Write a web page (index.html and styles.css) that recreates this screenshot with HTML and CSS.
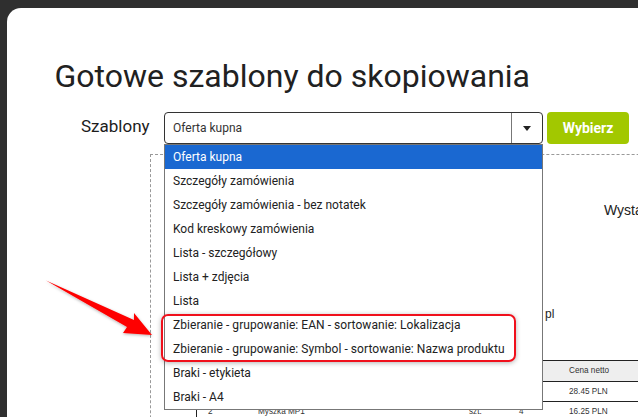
FILE: index.html
```html
<!DOCTYPE html>
<html lang="pl">
<head>
<meta charset="utf-8">
<title>Gotowe szablony</title>
<link rel="stylesheet" href="styles.css">
</head>
<body>
<main class="modal">
  <h1 class="title">Gotowe szablony do skopiowania</h1>
  <div class="picker">
    <label class="picker-label">Szablony</label>
    <div class="select">
      <span class="select-value">Oferta kupna</span>
      <span class="select-toggle"><span class="caret"></span></span>
    </div>
    <button class="choose">Wybierz</button>
  </div>
  <div class="preview">
    <span class="preview-issued">Wysta</span>
    <span class="preview-mail">pl</span>
    <div class="preview-table">
      <div class="preview-row head"><span class="c-price">Cena netto</span></div>
      <div class="preview-row"><span class="c-price">28.45 PLN</span></div>
      <div class="preview-row"><span class="c-no">2</span><span class="c-name">Myszka MP1</span><span class="c-unit">szt.</span><span class="c-qty">4</span><span class="c-price">16.25 PLN</span></div>
    </div>
  </div>
  <ul class="options">
    <li class="option active">Oferta kupna</li>
    <li class="option">Szczegóły zamówienia</li>
    <li class="option">Szczegóły zamówienia - bez notatek</li>
    <li class="option">Kod kreskowy zamówienia</li>
    <li class="option">Lista - szczegółowy</li>
    <li class="option">Lista + zdjęcia</li>
    <li class="option">Lista</li>
    <li class="option wide">Zbieranie - grupowanie: EAN - sortowanie: Lokalizacja</li>
    <li class="option wide">Zbieranie - grupowanie: Symbol - sortowanie: Nazwa produktu</li>
    <li class="option">Braki - etykieta</li>
    <li class="option">Braki - A4</li>
  </ul>
  <div class="highlight"></div>
  <svg class="arrow" width="120" height="70" viewBox="0 0 120 70">
    <defs><filter id="s" x="-20%" y="-20%" width="140%" height="150%"><feDropShadow dx="0" dy="1" stdDeviation="1.5" flood-color="#000" flood-opacity=".3"/></filter></defs>
    <path d="M1 0.5 L89 40 L89 33 L107 55 L78 53 L82 47 Z" fill="#fe0000" filter="url(#s)"/>
  </svg>
</main>
</body>
</html>
```
FILE: styles.css
```css
* { box-sizing: border-box; }
html, body { margin: 0; height: 100%; }
body {
  background: #2f2f2f;
  overflow: hidden;
  padding: 8px 0 0 7px;
  font-family: Roboto, "Liberation Sans", sans-serif;
}
.modal {
  position: relative;
  width: 631px;
  height: 409px;
  overflow: hidden;
  background: #fff;
  border-radius: 14px 0 0 0;
  padding: 50px 0 0 47.5px;
}
.title {
  margin: 0;
  font-size: 32px;
  line-height: 37px;
  font-weight: 400;
  color: #212121;
  white-space: nowrap;
}
.picker {
  display: flex;
  align-items: center;
  margin-top: 17px;
  margin-left: 26.5px;
}
.picker-label {
  width: 83px;
  font-size: 17px;
  line-height: 28px;
  margin-top: -5px;
  color: #1c1c1c;
}
.select {
  display: flex;
  width: 379px;
  height: 32px;
  border: 1px solid #333;
  border-radius: 4px;
  background: #fff;
}
.select-value {
  flex: 1;
  padding: 0 8px;
  font-size: 12px;
  line-height: 30px;
  color: #333;
}
.select-toggle {
  width: 31px;
  border-left: 1px solid #777;
  display: flex;
  align-items: center;
  justify-content: center;
}
.caret {
  width: 0;
  height: 0;
  border: 4px solid transparent;
  border-top: 5px solid #222;
  border-bottom: 0;
}
.choose {
  width: 82px;
  height: 32px;
  margin-left: 4px;
  border: 0;
  border-radius: 4px;
  background: #a2c800;
  color: #fff;
  font: 700 14px Roboto, sans-serif;
}
.preview {
  position: absolute;
  left: 143px;
  top: 146px;
  width: 600px;
  height: 400px;
  border: 1px dashed #999;
  font-family: "Liberation Sans", sans-serif;
}
.preview-issued {
  position: absolute;
  left: 453px;
  top: 47px;
  font-size: 14px;
  color: #222;
}
.preview-mail {
  position: absolute;
  left: 394px;
  top: 152px;
  font-size: 12px;
  color: #222;
}
.preview-table {
  position: absolute;
  left: 45px;
  top: 205px;
  width: 560px;
  border-top: 1px solid #222;
  border-left: 1px solid #222;
  font-size: 8.2px;
  color: #333;
}
.preview-row {
  position: relative;
  height: 20px;
  border-bottom: 1px solid #222;
}
.preview-row.head { height: 21px; background: #eee; }
.preview-row span { position: absolute; top: 5px; }
.c-no { left: 11px; }
.c-name { left: 61px; }
.c-unit { left: 272px; }
.c-qty { left: 322px; }
.c-price { left: 372px; }
.options {
  position: absolute;
  left: 157px;
  top: 136px;
  width: 379px;
  margin: 0;
  padding: 0;
  list-style: none;
  background: #fff;
  border: 1px solid #777;
}
.option {
  height: 24px;
  padding-left: 8px;
  font-size: 12px;
  line-height: 24px;
  color: #222;
  white-space: nowrap;
}
.option.wide { letter-spacing: .05px; }
.option.active { background: #1a68d1; color: #fff; }
.highlight {
  position: absolute;
  left: 154px;
  top: 306px;
  width: 355px;
  height: 48px;
  border: 2px solid #f0101c;
  border-radius: 7px;
  box-shadow: 0 1px 5px rgba(0,0,0,.3);
}
.arrow {
  position: absolute;
  left: 38px;
  top: 272px;
}
```
